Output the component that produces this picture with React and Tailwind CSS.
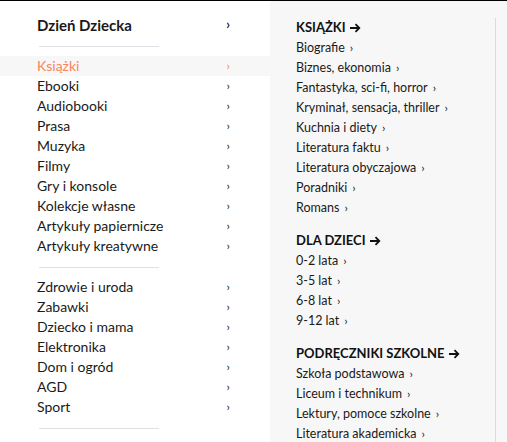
const main = [
  "Książki",
  "Ebooki",
  "Audiobooki",
  "Prasa",
  "Muzyka",
  "Filmy",
  "Gry i konsole",
  "Kolekcje własne",
  "Artykuły papiernicze",
  "Artykuły kreatywne",
];

const other = ["Zdrowie i uroda", "Zabawki", "Dziecko i mama", "Elektronika", "Dom i ogród", "AGD", "Sport"];

const sections = [
  {
    title: "KSIĄŻKI",
    items: [
      "Biografie",
      "Biznes, ekonomia",
      "Fantastyka, sci-fi, horror",
      "Kryminał, sensacja, thriller",
      "Kuchnia i diety",
      "Literatura faktu",
      "Literatura obyczajowa",
      "Poradniki",
      "Romans",
    ],
  },
  { title: "DLA DZIECI", items: ["0-2 lata", "3-5 lat", "6-8 lat", "9-12 lat"] },
  {
    title: "PODRĘCZNIKI SZKOLNE",
    items: ["Szkoła podstawowa", "Liceum i technikum", "Lektury, pomoce szkolne", "Literatura akademicka"],
  },
];

function MenuRow({ label, active }) {
  return (
    <div className={`flex h-5 items-center justify-between pl-[37px] pr-[40px] ${active ? "bg-[#f7f7f7]" : ""}`}>
      <span className={`text-[14px] leading-5 ${active ? "text-[#f7865a]" : "text-[#1a1a1a]"}`}>{label}</span>
      <span className={`text-[12px] leading-5 ${active ? "text-[#f7865a]" : "text-[#222]"}`}>›</span>
    </div>
  );
}

export default function App() {
  return (
    <div className="flex h-[442px] w-[507px] overflow-hidden border-t border-black bg-white font-['Lato',sans-serif]">
      <div className="w-[270px] shrink-0 bg-white">
        <div className="flex h-[45px] items-center justify-between pl-[37px] pr-[40px] pt-[3px]">
          <span className="text-[15px] font-bold text-[#1a1a1a]">Dzień Dziecka</span>
          <span className="text-[13px] font-bold text-[#1a1a1a]">›</span>
        </div>
        <div className="ml-[39px] h-px w-[120px] bg-[#e0e0e6]" />
        <div className="pt-[9px]">
          {main.map((m, i) => (
            <MenuRow key={m} label={m} active={i === 0} />
          ))}
        </div>
        <div className="ml-[39px] mt-[11px] h-px w-[120px] bg-[#e0e0e6]" />
        <div className="pt-[9px]">
          {other.map((m) => (
            <MenuRow key={m} label={m} />
          ))}
        </div>
        <div className="ml-[39px] mt-[11px] h-px w-[120px] bg-[#e0e0e6]" />
      </div>
      <div className="flex flex-1 bg-[#f7f7f8]">
        <div className="w-[225px] shrink-0 pl-[26px] pt-[17px]">
          {sections.map((s) => (
            <div key={s.title} className="mb-[13px]">
              <div className="flex h-5 items-center gap-1 text-[13px] font-bold text-[#111]">
                {s.title}
                <svg width="11" height="10" viewBox="0 0 11 10" fill="none" stroke="#111" strokeWidth="1.8">
                  <path d="M0 5h9M5.5 1.2L9.3 5 5.5 8.8" />
                </svg>
              </div>
              {s.items.map((it) => (
                <div key={it} className="flex h-5 items-center text-[12.5px] text-[#1a1a1a]">
                  {it}
                  <span className="ml-[5px] text-[12px] leading-5">›</span>
                </div>
              ))}
            </div>
          ))}
        </div>
        <div className="mt-[17px] w-px bg-[#dcdcdc]" />
      </div>
    </div>
  );
}
